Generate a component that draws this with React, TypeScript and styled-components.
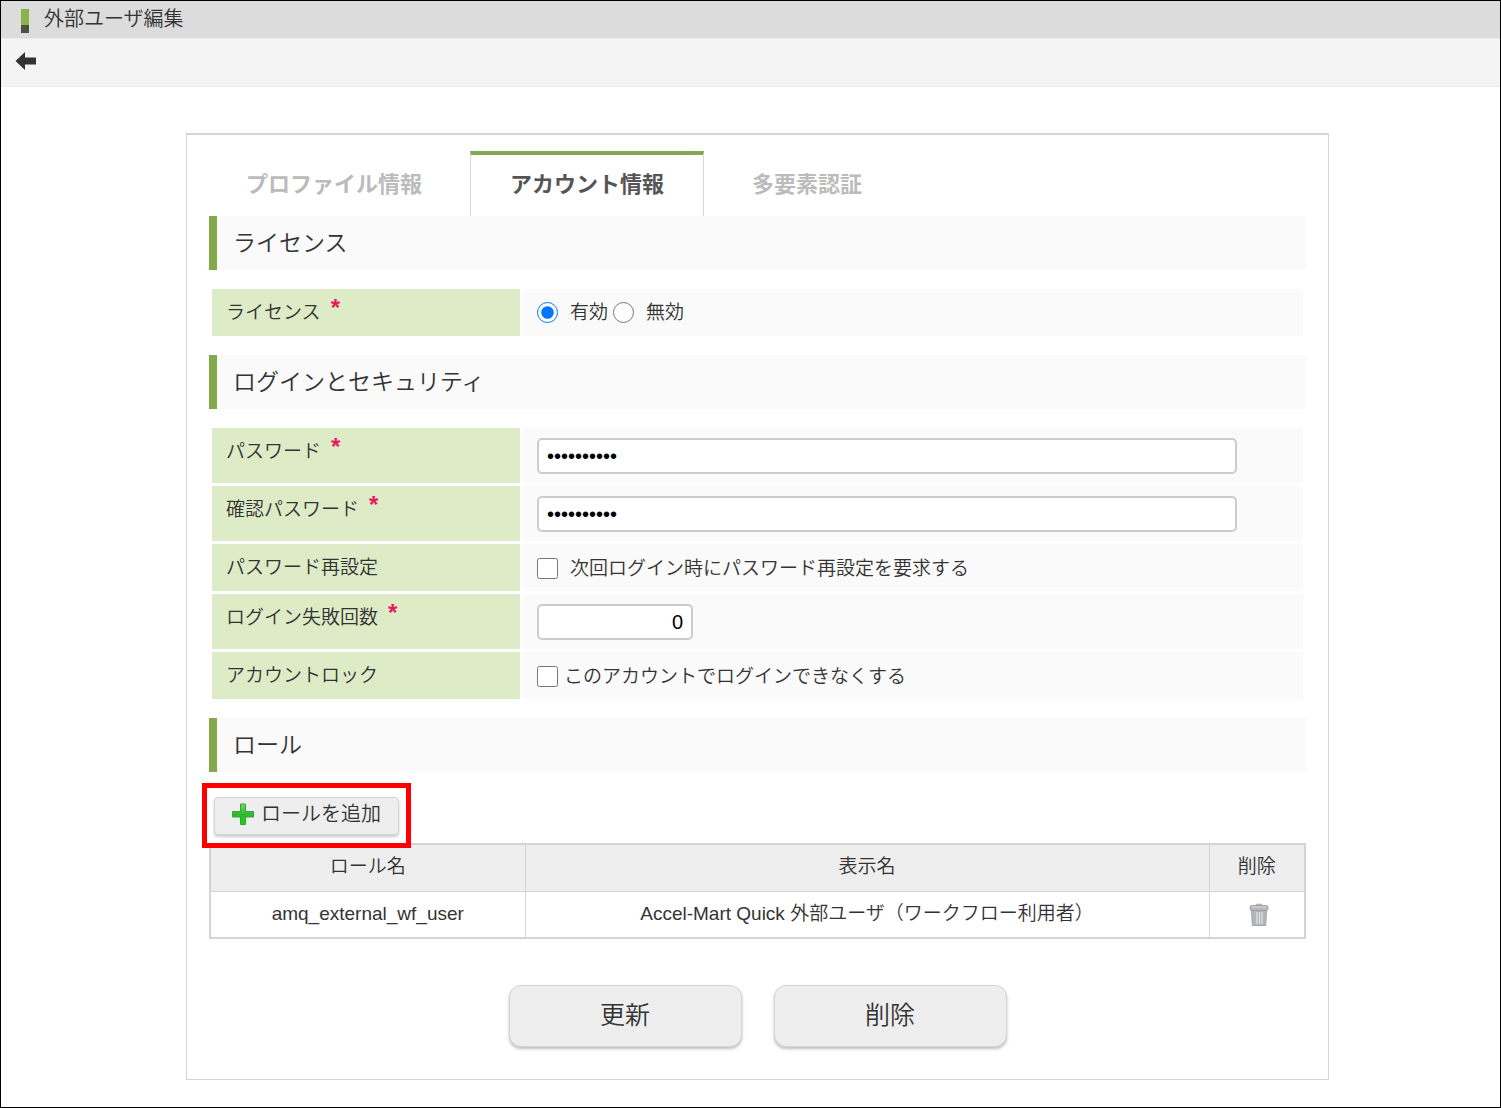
import React, { useState } from "react";
import styled, { createGlobalStyle } from "styled-components";

const GlobalStyle = createGlobalStyle`
  *, *::before, *::after { box-sizing: border-box; }
  body { margin: 0; background: #fff; }
  body, button, input {
    font-family: "Liberation Sans", "Noto Sans CJK JP", sans-serif;
    font-weight: 350;
    color: #333;
  }
`;

const Page = styled.div`
  min-height: 100vh;
  border: 1px solid #000;
  background: #fff;
  font-size: 19px;
  line-height: 27px;
`;

const TitleBar = styled.header`
  display: flex;
  align-items: center;
  gap: 15px;
  height: 37px;
  padding: 0 20px;
  background: #dcdcdc;
`;

const TitleMark = styled.span`
  width: 8px;
  height: 24px;
  margin-top: 3px;
  background: #8ab34d;
  border-bottom: 8px solid #4b5340;
`;

const Title = styled.h1`
  margin: 0;
  padding-bottom: 2px;
  font-size: 20px;
  font-weight: 350;
  line-height: 34px;
`;

const Toolbar = styled.nav`
  display: flex;
  align-items: center;
  height: 49px;
  padding: 0 13px 4px;
  background: #f4f4f4;
  border-top: 1px solid #eaeaea;
  border-bottom: 1px solid #eaeaea;
`;

const IconButton = styled.button`
  display: inline-flex;
  padding: 0;
  border: 0;
  background: none;
  cursor: pointer;
  vertical-align: middle;
`;

const Panel = styled.main`
  margin: 46px 171px 27px 185px;
  padding: 16px 22px 32px;
  border: 1px solid #d4d4d4;
  border-top-width: 2px;
`;

const Tabs = styled.div`
  display: flex;
  gap: 8px;
`;

const Tab = styled.button<{ $active?: boolean }>`
  height: 65px;
  padding: 0 39px 7px;
  border: 1px solid ${(p) => (p.$active ? "#d9d9d9" : "transparent")};
  border-top: 4px solid ${(p) => (p.$active ? "#84a655" : "transparent")};
  border-bottom: 0;
  background: none;
  color: ${(p) => (p.$active ? "#555" : "#bbb")};
  font-size: 22px;
  font-weight: 700;
  white-space: nowrap;
  cursor: pointer;

  &:first-child { padding-left: 36px; }
`;

const SectionTitle = styled.h2`
  margin: 0;
  padding: 0 16px;
  border-left: 8px solid #82a94c;
  background: #fafafa;
  font-size: 23px;
  font-weight: 350;
  line-height: 54px;
`;

const FormTable = styled.table`
  width: 100%;
  margin: 16px 0;
  border-spacing: 3px;
  table-layout: fixed;
`;

const LabelCell = styled.th`
  width: 308px;
  padding: 10px 14px;
  background: #deebc7;
  font-weight: 350;
  text-align: left;
  vertical-align: top;
`;

const FieldCell = styled.td`
  height: 47px;
  padding: 0 14px;
  background: #fafafa;
`;

const Required = styled.span`
  margin-left: 10px;
  color: #e8175d;
  font-size: 24px;
  font-weight: 700;
  line-height: 16px;
  vertical-align: 3px;
`;

const Choices = styled.div`
  display: flex;
  align-items: center;
  gap: 5px;
`;

const Choice = styled.label<{ $gap: number }>`
  display: inline-flex;
  align-items: center;
  gap: ${(p) => p.$gap}px;
  vertical-align: middle;
`;

const Tick = styled.input`
  width: 21px;
  height: 21px;
  margin: 0;
`;

const TextBox = styled.input<{ $short?: boolean }>`
  display: block;
  width: 100%;
  max-width: ${(p) => (p.$short ? 156 : 700)}px;
  height: 36px;
  margin: 10px 0 9px;
  padding: 0 8px;
  border: 2px solid #ccc;
  border-radius: 5px;
  background: #fff;
  color: #000;
  font-size: 20px;
  text-align: ${(p) => (p.$short ? "right" : "left")};
`;

const Actions = styled.div`
  display: flex;
  padding: 25px 5px 8px;
`;

const Highlighted = styled.div`
  position: relative;
`;

const HighlightFrame = styled.span`
  position: absolute;
  inset: -14px -12px -13px;
  z-index: 1;
  border: 5px solid #f00;
  pointer-events: none;
`;

const AddButton = styled.button`
  display: flex;
  align-items: center;
  gap: 6px;
  height: 38px;
  padding: 0 17px 4px 16px;
  border: 1px solid #d4d4d4;
  border-radius: 4px;
  background: #eee;
  box-shadow: 0 2px 3px rgba(0, 0, 0, 0.2);
  font-size: 20px;
  line-height: 27px;
  cursor: pointer;
`;

const RoleTable = styled.table`
  width: 100%;
  border: 2px solid #d4d4d4;
  border-collapse: collapse;
  table-layout: fixed;

  th, td {
    height: 47px;
    padding: 0 0 2px;
    border: 1px solid #d4d4d4;
    font-weight: 350;
    text-align: center;
  }
  th { background: #eee; }
`;

const RoleHead = styled.th<{ $width?: number }>`
  width: ${(p) => (p.$width ? `${p.$width}px` : "auto")};
`;

const Footer = styled.div`
  display: flex;
  justify-content: center;
  gap: 32px;
  margin-top: 46px;
`;

const BigButton = styled.button`
  width: 233px;
  height: 62px;
  padding: 0 0 6px;
  border: 1px solid #d4d4d4;
  border-radius: 12px;
  background: #eee;
  box-shadow: 0 2px 3px rgba(0, 0, 0, 0.25);
  font-size: 25px;
  cursor: pointer;
`;

function BackIcon() {
  return (
    <svg width="23" height="20" viewBox="0 0 23 20" aria-hidden="true">
      <path d="M1.500 10 11 1v5.500H22v7H11V19z" fill="#333" />
    </svg>
  );
}

function PlusIcon() {
  return (
    <svg width="24" height="24" viewBox="0 0 24 24" aria-hidden="true">
      <defs>
        <linearGradient id="plus" x1="0" y1="0" x2="0" y2="1">
          <stop offset="0" stopColor="#6fdc62" />
          <stop offset="0.5" stopColor="#2fb82f" />
          <stop offset="1" stopColor="#12d612" />
        </linearGradient>
      </defs>
      <path
        d="M9.500 2h5v7.500H22.500v5.500h-8V22.500h-5V15H1.500V9.500h8z"
        fill="url(#plus)"
        stroke="#3f9f3a"
        strokeLinejoin="round"
      />
    </svg>
  );
}

function TrashIcon() {
  return (
    <svg width="24" height="24" viewBox="-4 0 24 24" aria-hidden="true">
      <path d="M7.500 3V1.500h5V3" fill="none" stroke="#b5b5b5" strokeWidth="1.500" />
      <path d="M2.500 7h15l-.8 15.500H3.300z" fill="#b4b4bb" stroke="#a4a4aa" />
      <path d="M8 9v12M10.500 9v12M13 9v12" stroke="#e2e2e8" strokeWidth="1.200" />
      <rect x="1" y="2.500" width="18" height="5" rx="1.500" fill="#b8b8bd" stroke="#99999f" strokeWidth=".8" />
      <path d="M2.500 4h15" stroke="#d6d6da" />
    </svg>
  );
}

type RowProps = {
  label: string;
  htmlFor?: string;
  required?: boolean;
  children: React.ReactNode;
};

function FormRow({ label, htmlFor, required, children }: RowProps) {
  return (
    <tr>
      <LabelCell scope="row">
        {htmlFor ? <label htmlFor={htmlFor}>{label}</label> : label}
        {required && <Required>*</Required>}
      </LabelCell>
      <FieldCell>{children}</FieldCell>
    </tr>
  );
}

const tabs = ["プロファイル情報", "アカウント情報", "多要素認証"];

const roles = [
  { name: "amq_external_wf_user", display: "Accel-Mart Quick 外部ユーザ（ワークフロー利用者）" },
];

export default function App() {
  const [active, setActive] = useState(1);

  return (
    <Page>
      <GlobalStyle />
      <TitleBar>
        <TitleMark />
        <Title>外部ユーザ編集</Title>
      </TitleBar>
      <Toolbar>
        <IconButton type="button" aria-label="戻る">
          <BackIcon />
        </IconButton>
      </Toolbar>

      <Panel>
        <Tabs role="tablist">
          {tabs.map((name, i) => (
            <Tab
              key={name}
              type="button"
              role="tab"
              aria-selected={i === active}
              $active={i === active}
              onClick={() => setActive(i)}
            >
              {name}
            </Tab>
          ))}
        </Tabs>

        <SectionTitle>ライセンス</SectionTitle>
        <FormTable>
          <tbody>
            <FormRow label="ライセンス" required>
              <Choices role="radiogroup" aria-label="ライセンス">
                <Choice $gap={12}>
                  <Tick type="radio" name="license" defaultChecked />
                  有効
                </Choice>
                <Choice $gap={12}>
                  <Tick type="radio" name="license" />
                  無効
                </Choice>
              </Choices>
            </FormRow>
          </tbody>
        </FormTable>

        <SectionTitle>ログインとセキュリティ</SectionTitle>
        <FormTable>
          <tbody>
            <FormRow label="パスワード" htmlFor="password" required>
              <TextBox id="password" type="password" defaultValue="0123456789" />
            </FormRow>
            <FormRow label="確認パスワード" htmlFor="confirm" required>
              <TextBox id="confirm" type="password" defaultValue="0123456789" />
            </FormRow>
            <FormRow label="パスワード再設定">
              <Choice $gap={12}>
                <Tick type="checkbox" />
                次回ログイン時にパスワード再設定を要求する
              </Choice>
            </FormRow>
            <FormRow label="ログイン失敗回数" htmlFor="failures" required>
              <TextBox id="failures" type="text" inputMode="numeric" defaultValue="0" $short />
            </FormRow>
            <FormRow label="アカウントロック">
              <Choice $gap={6}>
                <Tick type="checkbox" />
                このアカウントでログインできなくする
              </Choice>
            </FormRow>
          </tbody>
        </FormTable>

        <SectionTitle>ロール</SectionTitle>
        <Actions>
          <Highlighted>
            <AddButton type="button">
              <PlusIcon />
              ロールを追加
            </AddButton>
            <HighlightFrame />
          </Highlighted>
        </Actions>
        <RoleTable>
          <thead>
            <tr>
              <RoleHead $width={315}>ロール名</RoleHead>
              <RoleHead>表示名</RoleHead>
              <RoleHead $width={96}>削除</RoleHead>
            </tr>
          </thead>
          <tbody>
            {roles.map((role) => (
              <tr key={role.name}>
                <td>{role.name}</td>
                <td>{role.display}</td>
                <td>
                  <IconButton type="button" aria-label="削除">
                    <TrashIcon />
                  </IconButton>
                </td>
              </tr>
            ))}
          </tbody>
        </RoleTable>

        <Footer>
          <BigButton type="button">更新</BigButton>
          <BigButton type="button">削除</BigButton>
        </Footer>
      </Panel>
    </Page>
  );
}
